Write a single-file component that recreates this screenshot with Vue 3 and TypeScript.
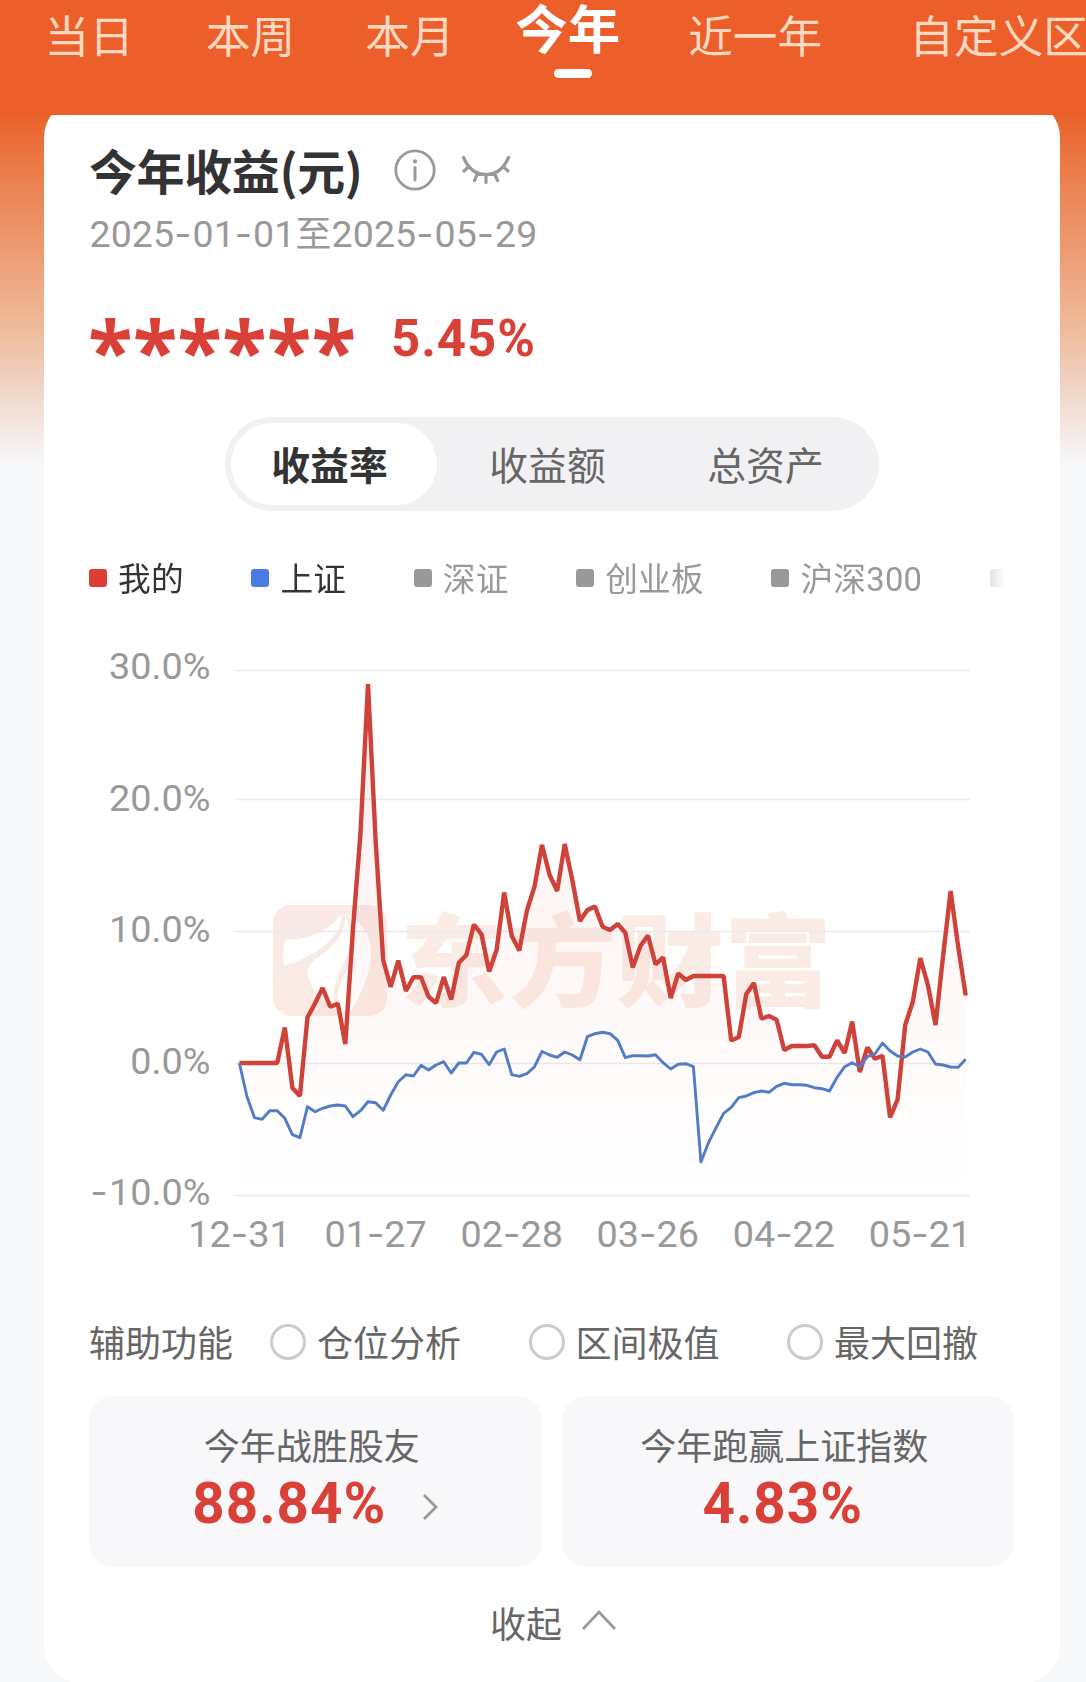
<script setup lang="ts">
interface Tab { label: string; gap: number; active?: boolean }
interface Legend { label: string; color: string; on?: boolean }

const tabs: Tab[] = [
  { label: '当日', gap: 44.5 },
  { label: '本周', gap: 72 },
  { label: '本月', gap: 70 },
  { label: '今年', gap: 60.5, active: true },
  { label: '近一年', gap: 68 },
  { label: '自定义区间', gap: 87 },
]

const legends: Legend[] = [
  { label: '我的', color: '#df3d33', on: true },
  { label: '上证', color: '#4a7be5', on: true },
  { label: '深证', color: '#999999' },
  { label: '创业板', color: '#999999' },
  { label: '沪深300', color: '#999999' },
  { label: '', color: '#999999' },
]

const metrics = ['收益率', '收益额', '总资产']
const helpers = ['仓位分析', '区间极值', '最大回撤']

const gridLines = [
  { y: 670.5, label: '30.0%' },
  { y: 799.5, label: '20.0%' },
  { y: 931.5, label: '10.0%' },
  { y: 1063.5, label: '0.0%' },
  { y: 1195.5, label: '-10.0%' },
]
const labelBase = [679, 811, 942, 1073.5, 1205]
const dates = ['12-31', '01-27', '02-28', '03-26', '04-22', '05-21']

const x0 = 239.4
const step = 7.566

const mine: number[] = [
  1063, 1063, 1063, 1063, 1063, 1063, 1027.5, 1088, 1096, 1017.3, 1003.3, 988, 1006.7, 1003.7, 1044, 930,
  833, 684, 840, 960, 987, 960.5, 991, 977.3, 977.3, 996.7, 1003, 977, 999.5, 962.7, 955, 924.5, 934.3, 971.5,
  950, 892.5, 936, 950.5, 910.7, 886.7, 845, 875, 891, 844, 880, 921, 910, 906.5, 926.7, 930, 924,
  932.7, 967.5, 946, 935.5, 964.3, 957.5, 998, 973.5, 980, 976, 976, 976, 976, 976, 1040.5, 1037, 994, 983,
  1018.7, 1016, 1019.7, 1050, 1046, 1046, 1046, 1045.3, 1056.7, 1056.7, 1040.5, 1053, 1021.5, 1072, 1047.5,
  1058.7, 1055.7, 1117.5, 1099.3, 1025, 1001.7, 958, 985, 1025, 956.7, 891, 946.7, 995.5,
]

const index: number[] = [
  1063.3, 1096.7, 1117.7, 1119.3, 1110.7, 1110.7, 1118.3, 1134.7, 1137.7, 1106.7, 1111.7, 1108.3, 1106,
  1105, 1106, 1116.7, 1110.7, 1101.7, 1102.7, 1110.3, 1095, 1081.7, 1074.7, 1076, 1065.3, 1070, 1065,
  1061.7, 1073, 1063, 1063, 1052.3, 1054.3, 1064.7, 1052, 1049, 1074.7, 1076.3, 1073.7, 1066.7, 1051.5,
  1055, 1057.3, 1052, 1055, 1059.7, 1036.7, 1033.7, 1032.3, 1033.7, 1040.3, 1057.7, 1055.7, 1055.7, 1056,
  1054.7, 1062.7, 1069, 1064.3, 1063.7, 1066.7, 1162, 1142.7, 1127.7, 1113.3, 1107.3, 1097.7, 1096,
  1092.7, 1091, 1092.3, 1086.3, 1083.3, 1084.7, 1084.7, 1085.3, 1087.7, 1088.7, 1091, 1077.3, 1066.7,
  1062.7, 1066.7, 1056.7, 1054, 1043, 1051, 1056, 1057, 1052, 1049, 1052, 1064, 1065, 1067, 1067.3, 1059.3,
]

const toPoints = (ys: number[]) => ys.map((y, i) => `${(x0 + step * i).toFixed(1)},${y}`).join(' ')
const minePoints = toPoints(mine)
const indexPoints = toPoints(index)
const areaPoints = `${x0},1195 ${minePoints} ${(x0 + step * 96).toFixed(1)},1195`
</script>

<template>
  <div class="page">
    <header class="tabs">
      <div
        v-for="t in tabs"
        :key="t.label"
        class="tab"
        :class="{ active: t.active }"
        :style="{ marginLeft: t.gap + 'px' }"
      >{{ t.label }}</div>
    </header>

    <main class="card">
      <div class="title-row">
        <h1>今年收益(元)</h1>
        <svg class="info" width="42" height="44" viewBox="0 0 42 44" fill="none" stroke="#999" stroke-width="2.8">
          <circle cx="21" cy="22" r="19.200" />
          <circle cx="21" cy="13.4" r="2.1" fill="#999" stroke="none" />
          <path d="M21 19.500v12.500" stroke-linecap="round" stroke-width="3" />
        </svg>
        <svg class="eye" width="50" height="32" viewBox="0 0 50 32" fill="none" stroke="#999" stroke-width="3.2" stroke-linecap="round">
          <path d="M2.500 3.500C7 14 15 20.500 25 20.500S43 14 47.500 3.500M7.500 13l-4.500 4M16.500 19.500l-3 7M25 21v7.500M33.500 19.500l3 7M42.500 13l4.500 4" />
        </svg>
      </div>

      <div class="range">2025<i>-</i>01<i>-</i>01<span>至</span>2025<i>-</i>05<i>-</i>29</div>

      <div class="value-row">
        <span class="stars">******</span>
        <span class="rate">5.45%</span>
      </div>

      <div class="segment">
        <div v-for="(m, i) in metrics" :key="m" class="seg" :class="{ on: i === 0 }">{{ m }}</div>
      </div>

      <div class="legend">
        <div v-for="l in legends" :key="l.label" class="leg" :class="{ on: l.on }">
          <b :style="{ background: l.color }"></b><span>{{ l.label }}</span>
        </div>
      </div>

      <svg class="chart" width="1016" height="642" viewBox="44 645 1016 642">
        <defs>
          <linearGradient id="area" x1="0" y1="684" x2="0" y2="1195" gradientUnits="userSpaceOnUse">
            <stop offset="0" stop-color="#e8453c" stop-opacity="0.09" />
            <stop offset="1" stop-color="#e8453c" stop-opacity="0" />
          </linearGradient>
          <linearGradient id="mark" x1="0" y1="0" x2="0" y2="1">
            <stop offset="0" stop-color="#f9e9e7" />
            <stop offset="1" stop-color="#faebe3" />
          </linearGradient>
        </defs>

        <rect x="273" y="905" width="114" height="111" rx="18" fill="url(#mark)" />
        <path d="M285 941C288 939 296 940 304 938C320 935 334 925 341 914C343 926 335 936 325 945C314 954 300 961 284 966C283 958 283 948 285 941Z" fill="#fff" />
        <path d="M345 914C346 931 337 943 324 953C316 959 308 964 308 970C307 982 314 995 334 1006C333 984 338 975 344 963C351 949 353 930 345 914Z" fill="#fff" />
        <path d="M348 914C360 922 371 934 371 951C371 974 360 998 350 1012C342 1010 338 1006 338 999C337 984 345 976 350 963C356 948 355 930 348 914Z" fill="#fff" />
        <text class="brand" x="400" y="999" textLength="432" lengthAdjust="spacingAndGlyphs">东方财富</text>

        <line v-for="g in gridLines" :key="g.y" x1="235" x2="970" :y1="g.y" :y2="g.y" stroke="#e9ebee" stroke-width="1.6" />
        <polygon :points="areaPoints" fill="url(#area)" />
        <polyline :points="minePoints" fill="none" stroke="#cf4239" stroke-width="4.4" stroke-linejoin="bevel" />
        <polyline :points="indexPoints" fill="none" stroke="#527cc6" stroke-width="2.9" stroke-linejoin="round" />

        <text v-for="(g, i) in gridLines" :key="g.label" class="axis" x="210.500" :y="labelBase[i]" text-anchor="end"><tspan v-if="g.label[0] === '-'" class="dash wide">-</tspan>{{ g.label.replace('-', '') }}</text>
        <text v-for="(d, i) in dates" :key="d" class="axis" :x="239.5 + 136.1 * i" y="1247" text-anchor="middle">{{ d.slice(0, 2) }}<tspan class="dash">-</tspan>{{ d.slice(3) }}</text>
      </svg>

      <div class="helpers">
        <span class="helpers-title">辅助功能</span>
        <label v-for="h in helpers" :key="h" class="helper"><b></b><span>{{ h }}</span></label>
      </div>

      <div class="stats">
        <div class="stat">
          <p>今年战胜股友</p>
          <div class="num first">
            88.84%
            <svg width="18" height="30" viewBox="0 0 18 30" fill="none" stroke="#999" stroke-width="2.8"><path d="M2 3l12 12L2 27" /></svg>
          </div>
        </div>
        <div class="stat">
          <p>今年跑赢上证指数</p>
          <div class="num second">4.83%</div>
        </div>
      </div>

      <div class="collapse">
        <span>收起</span>
        <svg width="36" height="24" viewBox="0 0 36 24" fill="none" stroke="#999" stroke-width="2.8"><path d="M2 21L18 4L34 21" /></svg>
      </div>
    </main>
  </div>
</template>

<style>
body { margin: 0; background: #f7f8fa; }
</style>

<style scoped>
.page {
  width: 1086px;
  height: 1682px;
  overflow: hidden;
  box-sizing: border-box;
  font-family: Roboto, "Noto Sans CJK SC", sans-serif;
  background: linear-gradient(to bottom, #ea622b 115px, #ec8554 190px, #eea27c 268px, #efb896 320px, #f0cbb9 370px, #f2ddd2 405px, #f5ebe8 437px, #f7f8fa 465px);
}
.tabs {
  position: relative;
  z-index: 1;
  height: 115px;
  display: flex;
  align-items: flex-start;
  background: #ec5f2b;
  overflow: hidden;
  white-space: nowrap;
  font-family: "Noto Sans CJK SC", sans-serif;
}
.tab {
  flex: none;
  font-size: 44.7px;
  line-height: 67px;
  color: #ffd8c0;
}
.tab.active {
  width: 105px;
  font-size: 52.5px;
  line-height: 52px;
  font-weight: 700;
  color: #fff;
  text-align: center;
}
.tab.active::after {
  content: "";
  display: block;
  width: 38px;
  height: 9px;
  margin: 17px 0 0 39px;
  border-radius: 5px;
  background: #fff;
}
.card {
  width: 1016px;
  height: 1582px;
  box-sizing: border-box;
  margin: -14px 0 0 44px;
  padding-top: 37px;
  border-radius: 36px;
  background: #fff;
}
.title-row {
  display: flex;
  align-items: center;
  height: 61px;
  padding-left: 45px;
}
h1 {
  margin: 0;
  width: 305px;
  font: 700 48px/60px "Noto Sans CJK SC", sans-serif;
  letter-spacing: -0.4px;
  color: #333;
}
.info { margin-top: 2px; }
.eye { margin: 3px 0 0 25px; }
.range {
  padding-left: 45.5px;
  height: 68px;
  line-height: 69px;
  font-size: 37.5px;
  letter-spacing: 0.1px;
  color: #999;
  white-space: nowrap;
}
.range i { font-family: Inter, sans-serif; font-style: normal; letter-spacing: 1px; }
.range span { font-size: 36px; }
.value-row {
  display: flex;
  height: 142px;
  padding-left: 45px;
  color: #d94037;
  font-weight: 700;
}
.stars {
  width: 303px;
  margin-left: -1px;
  font-family: "Open Sans", sans-serif;
  font-size: 82px;
  line-height: 165px;
}
.rate { font-size: 51px; line-height: 144px; letter-spacing: 0.9px; }
.segment {
  display: flex;
  width: 654px;
  height: 94px;
  box-sizing: border-box;
  margin: 8px 0 0 181px;
  padding: 6px;
  border-radius: 47px;
  background: #f1f1f4;
}
.seg {
  flex: none;
  width: 206px;
  height: 82px;
  box-sizing: border-box;
  margin-right: 12px;
  padding-right: 9px;
  border-radius: 41px;
  line-height: 87px;
  font-size: 38.8px;
  text-align: center;
  color: #666;
}
.seg.on { background: #fff; color: #333; font-weight: 700; }
.legend {
  display: flex;
  align-items: center;
  gap: 67.5px;
  width: 965px;
  height: 134px;
  box-sizing: border-box;
  padding-left: 45px;
  overflow: hidden;
  font-size: 32.7px;
  letter-spacing: 0.25px;
  color: #999;
  white-space: nowrap;
  -webkit-mask-image: linear-gradient(to right, #000 880px, rgba(0, 0, 0, 0.3) 945px, transparent 961px);
}
.leg { display: flex; align-items: center; flex: none; }
.leg.on { color: #333; }
.leg b { width: 18px; height: 18px; margin-right: 11px; border-radius: 3px; }
.leg span { margin-top: -4px; }
.chart { display: block; }
.brand { font: 900 101px "Noto Sans CJK SC", sans-serif; fill: #faece5; }
.axis { font: 400 37.8px Roboto, sans-serif; fill: #999; }
.dash { font-family: Inter, sans-serif; }
.dash.wide { letter-spacing: 1.5px; }
.helpers {
  display: flex;
  align-items: center;
  height: 109px;
  padding-left: 45px;
  font-size: 36px;
  color: #666;
}
.helpers-title { width: 181px; margin-top: -2px; }
.helper { display: flex; align-items: center; width: 258.5px; }
.helper span { margin-top: -2px; }
.helper b {
  width: 36px;
  height: 36px;
  box-sizing: border-box;
  margin-right: 11px;
  border: 3px solid #ccc;
  border-radius: 50%;
}
.stats { display: flex; gap: 20px; padding-left: 45px; }
.stat {
  width: 452.5px;
  height: 171px;
  box-sizing: border-box;
  padding: 25px 7px 0 0;
  border-radius: 24px;
  background: #f8f8fa;
  text-align: center;
}
.stat p { margin: 0; font-size: 36px; line-height: 54px; color: #666; }
.num {
  display: flex;
  align-items: center;
  justify-content: center;
  font-size: 56.5px;
  line-height: 59px;
  letter-spacing: 1px;
  font-weight: 700;
  color: #d94037;
}
.num.first { padding-left: 9px; }
.num.second { padding-right: 3px; }
.num svg { margin: 4px 0 0 36px; }
.collapse {
  display: flex;
  align-items: center;
  justify-content: center;
  height: 114px;
  padding-left: 3px;
  box-sizing: border-box;
  font-size: 36px;
  color: #666;
}
.collapse span { margin-top: -4px; }
.collapse svg { margin: -8px 0 0 19px; }
</style>
